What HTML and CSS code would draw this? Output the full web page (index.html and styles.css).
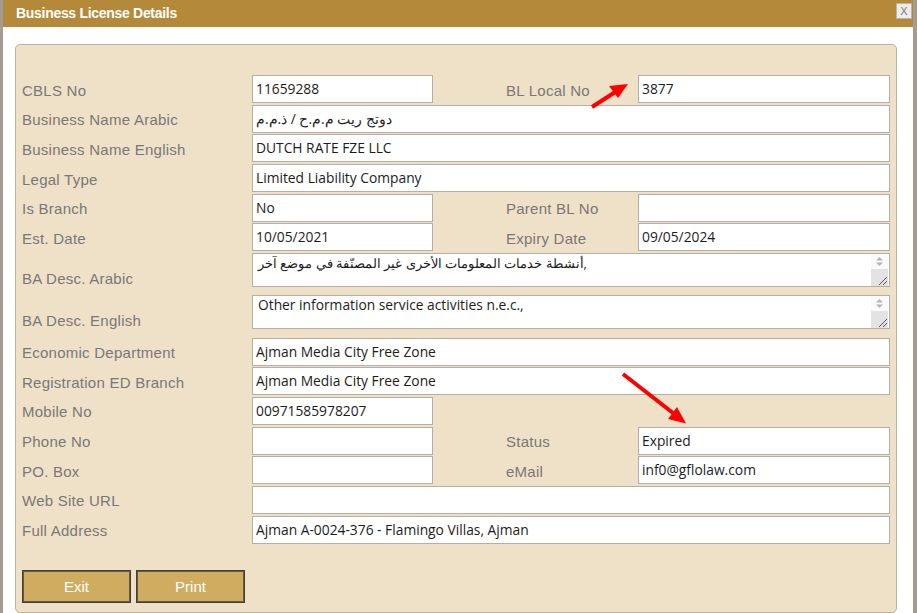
FILE: index.html
```html
<!DOCTYPE html>
<html>
<head>
<meta charset="utf-8">
<link rel="stylesheet" href="styles.css">
</head>
<body>
<div class="window">
  <div class="titlebar">
    <span class="title">Business License Details</span>
    <span class="close">X</span>
  </div>
  <div class="panel">
    <div class="form">
      <div class="lbl">CBLS No</div>
      <div class="fld half">11659288</div>
      <div class="lbl lbl2">BL Local No</div>
      <div class="fld right">3877</div>

      <div class="lbl">Business Name Arabic</div>
      <div class="fld full">دوتج ريت م.م.ح / ذ.م.م</div>

      <div class="lbl">Business Name English</div>
      <div class="fld full">DUTCH RATE FZE LLC</div>

      <div class="lbl">Legal Type</div>
      <div class="fld full">Limited Liability Company</div>

      <div class="lbl">Is Branch</div>
      <div class="fld half">No</div>
      <div class="lbl lbl2">Parent BL No</div>
      <div class="fld right"></div>

      <div class="lbl">Est. Date</div>
      <div class="fld half">10/05/2021</div>
      <div class="lbl lbl2">Expiry Date</div>
      <div class="fld right">09/05/2024</div>

      <div class="lbl lbl-ta">BA Desc. Arabic</div>
      <div class="ta full">
        <div class="ta-text ta-ar">أنشطة خدمات المعلومات الأخرى غير المصنّفة في موضع آخر,</div>
        <div class="sbar">
          <div class="sbar-top">
            <svg width="9" height="11" viewBox="0 0 9 11"><polygon points="4.5,1 8,4.5 1,4.5" fill="#b4b4b4"/><polygon points="1,6.5 8,6.5 4.5,10" fill="#b4b4b4"/></svg>
          </div>
          <div class="sbar-bot">
            <svg width="11" height="11" viewBox="0 0 11 11"><line x1="2" y1="10" x2="10" y2="2" stroke="#555" stroke-width="1"/><line x1="6" y1="10" x2="10" y2="6" stroke="#555" stroke-width="1"/></svg>
          </div>
        </div>
      </div>

      <div class="lbl lbl-ta">BA Desc. English</div>
      <div class="ta full">
        <div class="ta-text">Other information service activities n.e.c.,</div>
        <div class="sbar">
          <div class="sbar-top">
            <svg width="9" height="11" viewBox="0 0 9 11"><polygon points="4.5,1 8,4.5 1,4.5" fill="#b4b4b4"/><polygon points="1,6.5 8,6.5 4.5,10" fill="#b4b4b4"/></svg>
          </div>
          <div class="sbar-bot">
            <svg width="11" height="11" viewBox="0 0 11 11"><line x1="2" y1="10" x2="10" y2="2" stroke="#555" stroke-width="1"/><line x1="6" y1="10" x2="10" y2="6" stroke="#555" stroke-width="1"/></svg>
          </div>
        </div>
      </div>

      <div class="lbl">Economic Department</div>
      <div class="fld full">Ajman Media City Free Zone</div>

      <div class="lbl">Registration ED Branch</div>
      <div class="fld full">Ajman Media City Free Zone</div>

      <div class="lbl">Mobile No</div>
      <div class="fld half">00971585978207</div>
      <div class="empty"></div>

      <div class="lbl">Phone No</div>
      <div class="fld half"></div>
      <div class="lbl lbl2">Status</div>
      <div class="fld right">Expired</div>

      <div class="lbl">PO. Box</div>
      <div class="fld half"></div>
      <div class="lbl lbl2">eMail</div>
      <div class="fld right">inf0@gflolaw.com</div>

      <div class="lbl">Web Site URL</div>
      <div class="fld full"></div>

      <div class="lbl">Full Address</div>
      <div class="fld full">Ajman A-0024-376 - Flamingo Villas, Ajman</div>
    </div>
    <div class="buttons">
      <button class="btn">Exit</button>
      <button class="btn">Print</button>
    </div>
  </div>
</div>
<svg class="arrows" width="917" height="613" viewBox="0 0 917 613">
  <line x1="592" y1="107" x2="616" y2="91.5" stroke="#ff0000" stroke-width="4"/>
  <polygon points="628,84 609,86 618,98" fill="#ff0000"/>
  <line x1="623" y1="374" x2="673" y2="413" stroke="#ff0000" stroke-width="4"/>
  <polygon points="686,423.5 668,419 677,407" fill="#ff0000"/>
</svg>
</body>
</html>
```
FILE: styles.css
```css
html, body {
  margin: 0;
  padding: 0;
}
body {
  background: #a29c92;
  width: 917px;
  height: 613px;
  overflow: hidden;
  position: relative;
  font-family: "Liberation Sans", Arial, sans-serif;
}
.window {
  margin: 0 4px 0 3px;
  height: 613px;
  background: #ffffff;
  display: flex;
  flex-direction: column;
}
.titlebar {
  height: 27px;
  background: #b5893a;
  display: flex;
  align-items: flex-start;
  justify-content: space-between;
  padding: 0 1px 0 13px;
}
.title {
  color: #ffffff;
  font-weight: bold;
  font-size: 14px;
  line-height: 27px;
  letter-spacing: -0.3px;
}
.close {
  margin-top: 3px;
  width: 14px;
  height: 14px;
  background: #ececec;
  border: 1px solid #b5b5b5;
  color: #7a7a7a;
  font-size: 11px;
  line-height: 14px;
  text-align: center;
}
.panel {
  margin: 17px 16px 0 12px;
  height: 561px;
  background: #efe1c7;
  border: 1px solid #b9b2a6;
  border-radius: 5px;
  padding: 30px 0 0 6px;
}
.form {
  display: grid;
  grid-template-columns: 230px 181px 73px 132px 252px;
  row-gap: 1.7px;
  align-items: center;
}
.lbl {
  grid-column: 1;
  color: #787878;
  font-size: 15px;
  letter-spacing: 0.25px;
  padding-top: 2px;
}
.lbl2 {
  grid-column: 4;
}
.lbl-ta {
  align-self: end;
  padding-bottom: 7px;
}
.fld {
  height: 26px;
  background: #ffffff;
  border: 1px solid #b3afa8;
  font-family: "Open Sans", "Liberation Sans", sans-serif;
  font-size: 13.8px;
  line-height: 26px;
  color: #1c1c1c;
  padding: 0 3px;
  white-space: nowrap;
  overflow: hidden;
}
.half { grid-column: 2; }
.right { grid-column: 5; }
.full { grid-column: 2 / 6; }
.empty { grid-column: 3 / 6; height: 28px; }
.ta {
  box-sizing: border-box;
  height: 34px;
  margin: 0 0 6.5px 0;
  background: #ffffff;
  border: 1px solid #b3afa8;
  display: flex;
}
.ta-text {
  flex: 1;
  padding: 0 5px;
  font-family: "Open Sans", "Liberation Sans", sans-serif;
  font-size: 13.8px;
  line-height: 18px;
  color: #1c1c1c;
  white-space: nowrap;
  overflow: hidden;
}
.ta-ar {
  font-size: 12.8px;
}
.sbar {
  width: 17px;
  margin-right: 1px;
  display: flex;
  flex-direction: column;
}
.sbar-top {
  height: 15px;
  display: flex;
  justify-content: center;
  align-items: center;
  background: #fafafa;
}
.sbar-bot {
  flex: 1;
  background: #e3e3e3;
  display: flex;
  justify-content: flex-end;
  align-items: flex-end;
}
.buttons {
  display: flex;
  gap: 5px;
  margin-top: 26px;
}
.btn {
  width: 109px;
  height: 33px;
  background: #cfac5f;
  border: 1px solid #3e3e3e;
  box-shadow: inset 0 0 0 1px #6b5b3a;
  color: #ffffff;
  font-family: "Liberation Sans", Arial, sans-serif;
  font-size: 15px;
  padding: 0;
}
.arrows {
  position: absolute;
  left: 0;
  top: 0;
  pointer-events: none;
}
```
